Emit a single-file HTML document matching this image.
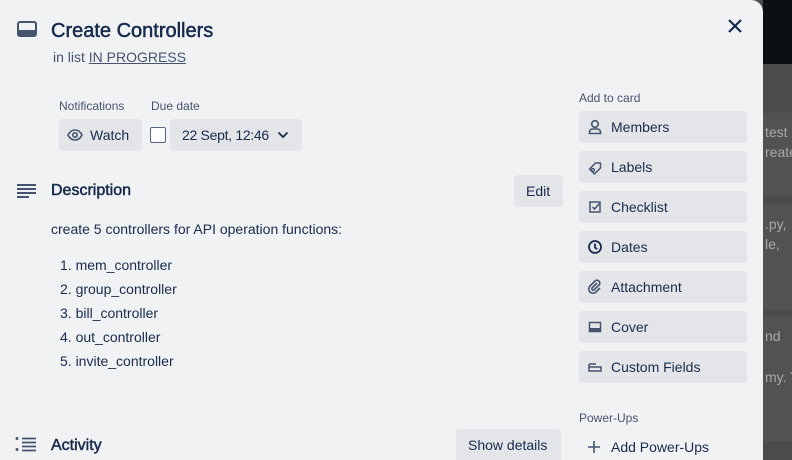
<!DOCTYPE html>
<html><head><meta charset="utf-8"><style>
*{margin:0;padding:0;box-sizing:border-box}
html,body{width:792px;height:460px;overflow:hidden}
body{background:#4b4c4e;font-family:"Liberation Sans",sans-serif;position:relative;color:#172b4d}
.a{position:absolute;white-space:nowrap}
.modal{left:0;top:0;width:763px;height:460px;background:#f1f2f4;border-top-right-radius:12px}
.btn{position:absolute;background:#e3e5e8;border-radius:3px;font-size:14px;color:#172b4d;white-space:nowrap}
.sb{left:579px;width:168px;height:32px}
.sb svg{position:absolute;left:8px;top:8px}
.sb span{position:absolute;left:32px;top:8px}
.lbl{font-size:12px;color:#44546f}
.li{font-size:14px;color:#172b4d;left:60px}
.rt{font-size:14px;color:#a8a9ab}
.sem{font-weight:normal;-webkit-text-stroke:0.5px currentColor}
</style></head><body>
<div class="a" style="left:763px;top:0;width:29px;height:64px;background:#0c1013"></div>
<div class="a" style="left:763px;top:64px;width:29px;height:396px;background:#4a4b4d"></div>
<div class="a" style="left:763px;top:113px;width:29px;height:82px;background:#505254"></div>
<div class="a" style="left:763px;top:205px;width:29px;height:105px;background:#505254"></div>
<div class="a" style="left:763px;top:317px;width:29px;height:125px;background:#505254"></div>
<div class="a rt" style="left:765px;top:124px">test t</div>
<div class="a rt" style="left:765px;top:144px">reate</div>
<div class="a rt" style="left:765px;top:216px">.py,</div>
<div class="a rt" style="left:765px;top:236px">le,</div>
<div class="a rt" style="left:765px;top:328px">nd</div>
<div class="a rt" style="left:765px;top:369px">my. T</div>

<div class="a modal"></div>
<svg class="a" style="left:17px;top:21px" width="20" height="17" viewBox="0 0 20 17"><rect x="1" y="1" width="18" height="14" rx="2" fill="none" stroke="#44546f" stroke-width="2"/><rect x="2" y="9" width="16" height="5" fill="#44546f"/></svg>
<div class="a sem" style="left:51px;top:20px;font-size:20px;color:#172b4d">Create Controllers</div>
<div class="a" style="left:53px;top:49px;font-size:14px;color:#44546f">in list <u>IN PROGRESS</u></div>
<svg class="a" style="left:727px;top:18px" width="16" height="16" viewBox="0 0 16 16"><path d="M2 2L14 14M14 2L2 14" stroke="#172b4d" stroke-width="2.2"/></svg>

<div class="a lbl" style="left:59px;top:99px">Notifications</div>
<div class="a lbl" style="left:151px;top:99px">Due date</div>
<div class="btn" style="left:59px;top:119px;width:83px;height:32px"><svg class="a" style="left:8px;top:10px" width="16" height="12" viewBox="0 0 16 12"><path d="M1 6C3 2 6 1 8 1s5 1 7 5c-2 4-5 5-7 5S3 10 1 6z" fill="none" stroke="#44546f" stroke-width="1.6"/><circle cx="8" cy="6" r="2.2" fill="none" stroke="#44546f" stroke-width="1.6"/></svg><span class="a" style="left:31px;top:8px">Watch</span></div>
<div class="a" style="left:150px;top:127px;width:16px;height:16px;border:1.5px solid #596780;border-radius:2px;background:#fff"></div>
<div class="btn" style="left:170px;top:119px;width:132px;height:32px"><span class="a" style="left:12px;top:8px;letter-spacing:-0.3px">22 Sept, 12:46</span><svg class="a" style="left:107px;top:12px" width="12" height="8" viewBox="0 0 12 8"><path d="M1.5 1.5L6 6l4.5-4.5" fill="none" stroke="#172b4d" stroke-width="1.8"/></svg></div>

<svg class="a" style="left:17px;top:184px" width="19" height="14" viewBox="0 0 19 14"><path d="M0 1h19M0 5h19M0 9h19M0 13h12" stroke="#44546f" stroke-width="2"/></svg>
<div class="a sem" style="left:51px;top:182px;font-size:16px;color:#172b4d">Description</div>
<div class="btn" style="left:514px;top:175px;width:49px;height:32px"><span class="a" style="left:12px;top:8px">Edit</span></div>
<div class="a" style="left:51px;top:221px;font-size:14px;color:#172b4d">create 5 controllers for API operation functions:</div>
<div class="a li" style="top:257px">1. mem_controller</div>
<div class="a li" style="top:281px">2. group_controller</div>
<div class="a li" style="top:305px">3. bill_controller</div>
<div class="a li" style="top:329px">4. out_controller</div>
<div class="a li" style="top:353px">5. invite_controller</div>

<svg class="a" style="left:15px;top:437px" width="21" height="15" viewBox="0 0 21 15"><circle cx="2" cy="1.5" r="1.5" fill="#44546f"/><circle cx="2" cy="12.5" r="1.5" fill="#44546f"/><path d="M7 1.5h14M7 5.5h14M7 9.5h14M7 13.5h14" stroke="#44546f" stroke-width="1.8"/></svg>
<div class="a sem" style="left:51px;top:437px;font-size:16px;color:#172b4d">Activity</div>
<div class="btn" style="left:456px;top:429px;width:105px;height:31px;border-radius:3px 3px 0 0"><span class="a" style="left:12px;top:8px">Show details</span></div>

<div class="a lbl" style="left:579px;top:91px">Add to card</div>
<div class="btn sb" style="top:111px"><svg width="16" height="16" viewBox="0 0 16 16"><circle cx="8" cy="5" r="3.3" fill="none" stroke="#44546f" stroke-width="1.6"/><path d="M2.5 14.5v-1.5a3 3 0 0 1 3-3h5a3 3 0 0 1 3 3v1.5z" fill="none" stroke="#44546f" stroke-width="1.6"/></svg><span>Members</span></div>
<div class="btn sb" style="top:151px"><svg width="16" height="16" viewBox="0 0 16 16"><path d="M2.5 10L8.5 4h5v5l-6 6z" fill="none" stroke="#44546f" stroke-width="1.5" stroke-linejoin="round"/><circle cx="6" cy="11" r="1.4" fill="none" stroke="#44546f" stroke-width="1.3"/></svg><span>Labels</span></div>
<div class="btn sb" style="top:191px"><svg width="16" height="16" viewBox="0 0 16 16"><rect x="3" y="3" width="10" height="10" fill="none" stroke="#44546f" stroke-width="1.5"/><path d="M5.5 8l2 2 5-5.5" fill="none" stroke="#44546f" stroke-width="1.5"/></svg><span>Checklist</span></div>
<div class="btn sb" style="top:231px"><svg width="16" height="16" viewBox="0 0 16 16"><circle cx="8" cy="8" r="6" fill="none" stroke="#172b4d" stroke-width="1.8"/><path d="M8 4.5V8.5l2.2 1.6" fill="none" stroke="#172b4d" stroke-width="1.8"/></svg><span>Dates</span></div>
<div class="btn sb" style="top:271px"><svg width="16" height="16" viewBox="0 0 16 16"><path d="M10 4l-5 5a1.5 1.5 0 0 0 2 2l5.5-5.5a3 3 0 0 0-4-4L3 7a4.2 4.2 0 0 0 6 6l4-4" fill="none" stroke="#44546f" stroke-width="1.6"/></svg><span>Attachment</span></div>
<div class="btn sb" style="top:311px"><svg width="16" height="16" viewBox="0 0 16 16"><rect x="2.5" y="3.5" width="11" height="9" fill="none" stroke="#44546f" stroke-width="1.5"/><rect x="2.5" y="9" width="11" height="3.5" fill="#44546f"/></svg><span>Cover</span></div>
<div class="btn sb" style="top:351px"><svg width="16" height="16" viewBox="0 0 16 16"><path d="M2 5h7M2 5v7h12V8H2" fill="none" stroke="#44546f" stroke-width="1.5"/></svg><span>Custom Fields</span></div>
<div class="a lbl" style="left:579px;top:411px">Power-Ups</div>
<svg class="a" style="left:587px;top:440px" width="14" height="14" viewBox="0 0 14 14"><path d="M7 1v12M1 7h12" stroke="#44546f" stroke-width="1.6"/></svg>
<div class="a" style="left:611px;top:439px;font-size:14px;color:#172b4d">Add Power-Ups</div>
</body></html>
